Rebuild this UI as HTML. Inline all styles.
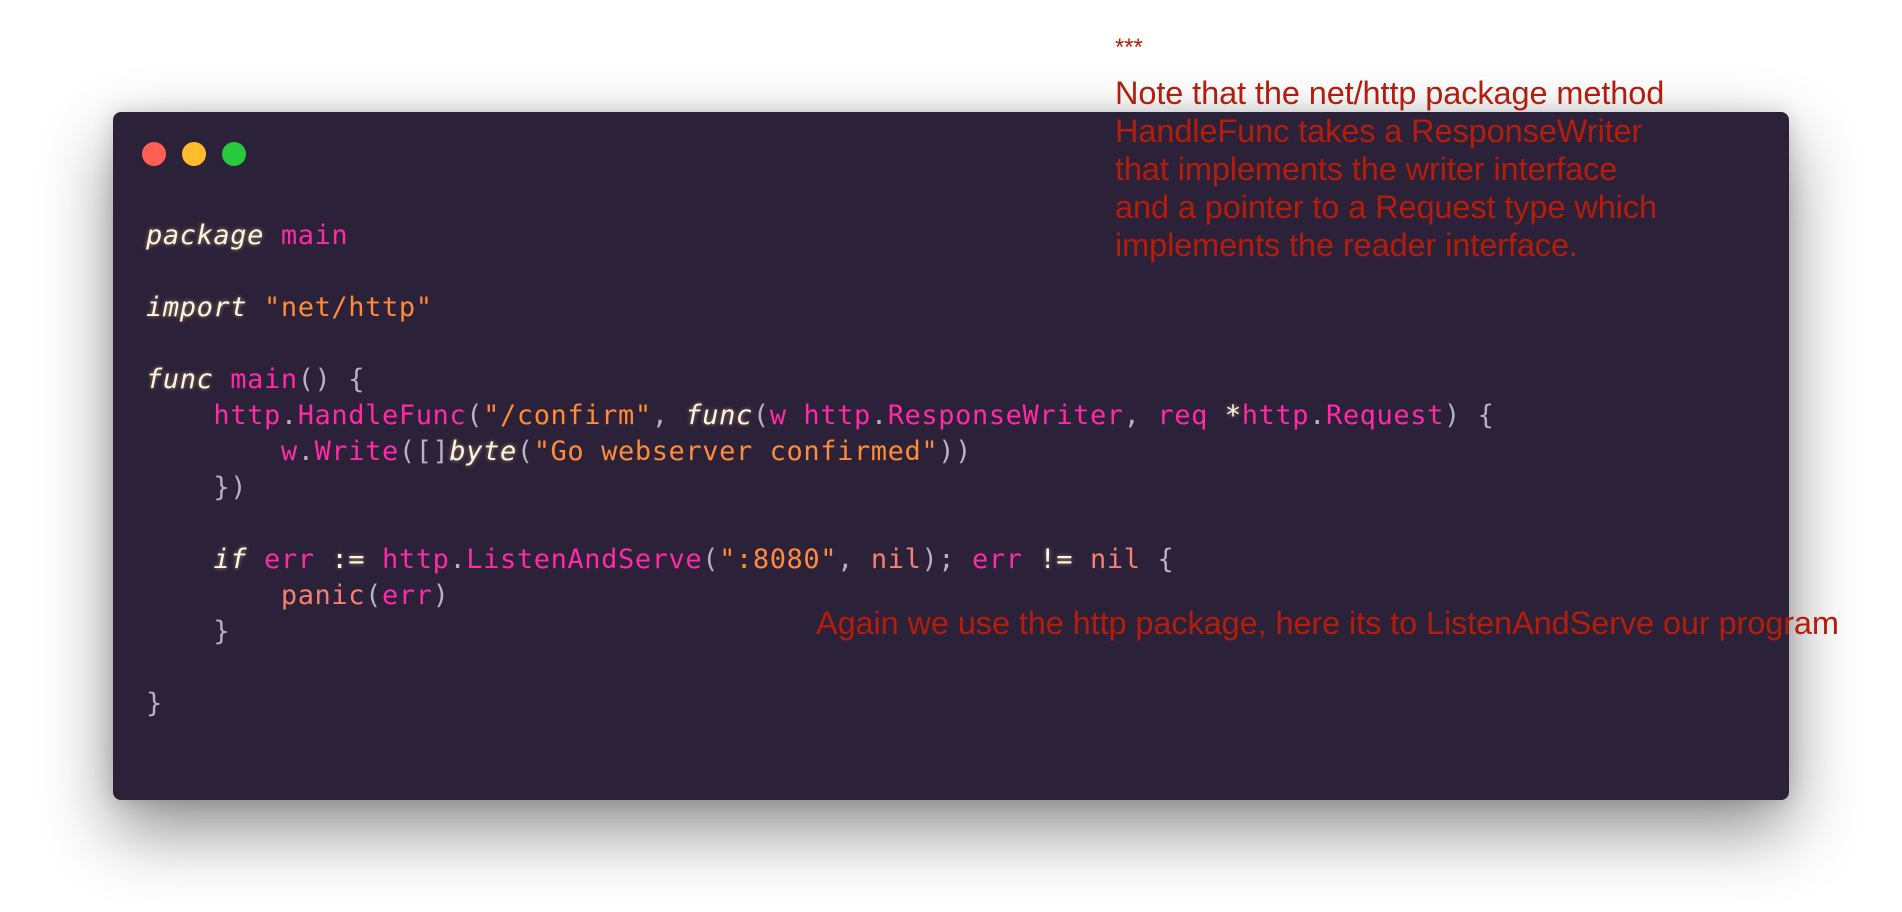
<!DOCTYPE html>
<html><head><meta charset="utf-8"><style>
html,body{margin:0;padding:0;width:1902px;height:912px;background:#fff;overflow:hidden;position:relative}
.win{position:absolute;left:113px;top:112px;width:1676px;height:688px;background:#2b2139;border-radius:8px;box-shadow:0 30px 70px rgba(0,0,0,0.45),0 0 20px rgba(0,0,0,0.15)}
.dot{position:absolute;top:142px;width:24px;height:24px;border-radius:50%}
pre{position:absolute;left:146px;top:218px;margin:0;font-family:"DejaVu Sans Mono","Liberation Mono",monospace;font-size:27px;line-height:36px;color:#b6b1c2;letter-spacing:0.6px}
.k{color:#fdf6e3;font-style:italic;text-shadow:0 0 4px rgba(253,200,120,.6)}
.p{color:#ff2aa5}
.s{color:#ff8b39}
.f{color:#f97e72}
.o{color:#fdf6e3;text-shadow:0 0 4px rgba(253,200,120,.6)}
.note{position:absolute;font-family:"Liberation Sans",Arial,sans-serif;color:#b31d0c;font-size:32.5px;line-height:38px;white-space:nowrap;letter-spacing:-0.1px}
</style></head><body>
<div class="win"></div>
<div class="dot" style="left:142px;background:#ff5f56"></div>
<div class="dot" style="left:182px;background:#ffbd2e"></div>
<div class="dot" style="left:222px;background:#27c93f"></div>
<pre><span class="k">package</span> <span class="p">main</span>

<span class="k">import</span> <span class="s">"net/http"</span>

<span class="k">func</span> <span class="p">main</span>() {
    <span class="p">http</span>.<span class="p">HandleFunc</span>(<span class="s">"/confirm"</span>, <span class="k">func</span>(<span class="p">w</span> <span class="p">http</span>.<span class="p">ResponseWriter</span>, <span class="p">req</span> <span class="o">*</span><span class="p">http</span>.<span class="p">Request</span>) {
        <span class="p">w</span>.<span class="p">Write</span>([]<span class="k">byte</span>(<span class="s">"Go webserver confirmed"</span>))
    })

    <span class="k">if</span> <span class="p">err</span> <span class="o">:=</span> <span class="p">http</span>.<span class="p">ListenAndServe</span>(<span class="s">":8080"</span>, <span class="f">nil</span>); <span class="p">err</span> <span class="o">!=</span> <span class="f">nil</span> {
        <span class="f">panic</span>(<span class="p">err</span>)
    }

}</pre>
<div class="note" style="left:1115px;top:36px;font-size:24px;line-height:24px">***</div>
<div class="note" style="left:1115px;top:74px">Note that the net/http package method<br>HandleFunc takes a ResponseWriter<br>that implements the writer interface<br>and a pointer to a Request type which<br>implements the reader interface.</div>
<div class="note" style="left:816px;top:604px">Again we use the http package, here its to ListenAndServe our program</div>
</body></html>
